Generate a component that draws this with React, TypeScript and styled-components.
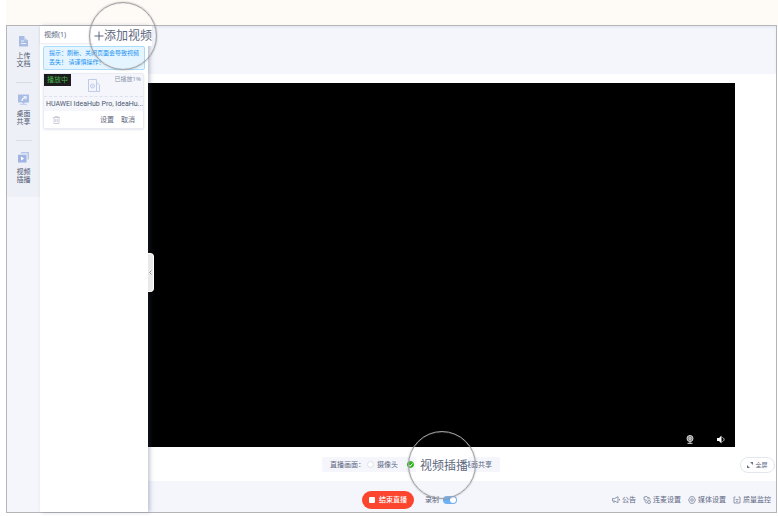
import React from "react";
import styled, { createGlobalStyle } from "styled-components";

const GlobalStyle = createGlobalStyle`
  * { box-sizing: border-box; }
  body {
    margin: 0;
    background: #fff;
    color: #5d6780;
    font: 7px/10px "Noto Sans", "Noto Sans CJK SC", sans-serif;
  }
  button {
    margin: 0;
    padding: 0;
    border: 0;
    background: none;
    color: inherit;
    font: inherit;
    white-space: nowrap;
    cursor: pointer;
  }
  svg { display: block; flex: none; }
`;

const Page = styled.div`
  display: flex;
  flex-direction: column;
  min-height: 100vh;
  padding: 0 1px 3px 6px;
`;

const Banner = styled.div`
  height: 25px;
  margin-right: -1px;
  background: #fefaf6;
`;

const Frame = styled.div`
  display: flex;
  flex: 1;
  border: 1px solid #b5b5b8;
`;

const Sidebar = styled.nav`
  width: 33px;
  background: #f4f6fc;
`;

const ToolList = styled.div`
  display: flex;
  flex-direction: column;
  gap: 1px;
  background: #eef0f7;
`;

const Tool = styled.button`
  display: flex;
  flex-direction: column;
  align-items: center;
  gap: 5px;
  height: 57px;
  padding-top: 10px;
  line-height: 8px;
  color: #4f5973;
  & + &::before {
    content: "";
    width: 16px;
    height: 1px;
    margin: -12px 0 6px;
    background: #dadde6;
  }
  &:last-child { height: 55px; }
`;

const ToolLabel = styled.span`
  width: 14px;
  white-space: normal;
`;

const Panel = styled.aside`
  position: relative;
  z-index: 1;
  width: 108px;
  background: #fff;
  box-shadow: 2px 0 4px rgba(60, 70, 110, 0.3);
`;

const PanelHeader = styled.header`
  position: relative;
  display: flex;
  align-items: center;
  height: 17px;
  padding-left: 4px;
  box-shadow: 0 1px 2px rgba(90, 100, 140, 0.15);
`;

const Title = styled.h1`
  margin: 0;
  font-size: 7px;
  font-weight: 400;
`;

const Notice = styled.p`
  margin: 3px 3px 0;
  padding: 2px 5px;
  border: 1px solid #a9dcfb;
  border-radius: 2px;
  background: #e4f5ff;
  color: #1d92f2;
  font-size: 6px;
  line-height: 9px;
  white-space: nowrap;
`;

const Card = styled.article`
  margin: 3px 4px 0 3px;
  border: 1px solid #eaecf4;
  border-radius: 2px;
  box-shadow: 0 1px 2px rgba(90, 100, 140, 0.15);
`;

const Thumb = styled.div`
  display: grid;
  grid-template-columns: 1fr auto 1fr;
  height: 23px;
  border-bottom: 1px dashed #dfe2ec;
  background: #f4f6fc;
  & > svg { margin-top: 5px; }
`;

const PlayTag = styled.span`
  justify-self: start;
  width: 27px;
  height: 12px;
  background: #1c1c1c;
  color: #45b34a;
  line-height: 12px;
  text-align: center;
`;

const Progress = styled.span`
  justify-self: end;
  padding-right: 2px;
  color: #8b93aa;
  font-size: 6px;
  white-space: nowrap;
`;

const CardTitle = styled.h2`
  margin: 0;
  padding: 0 2px;
  background: #f4f6fc;
  color: #4c566f;
  font-family: Roboto, "Noto Sans CJK SC", sans-serif;
  font-size: 7px;
  font-weight: 400;
  line-height: 14px;
  white-space: nowrap;
`;

const CardActions = styled.div`
  display: flex;
  align-items: center;
  gap: 7px;
  height: 17px;
  padding: 0 8px 0 9px;
  & > :first-child { margin-right: auto; }
`;

const Collapse = styled.button`
  position: absolute;
  top: 227px;
  left: 100%;
  display: grid;
  place-items: center;
  width: 6px;
  height: 39px;
  border: solid #fff;
  border-width: 1px 1px 1px 0;
  border-radius: 0 4px 4px 0;
  background: #e9e9ea;
`;

const Lens = styled.div<{ $wide?: boolean }>`
  position: absolute;
  z-index: 3;
  top: ${(p) => (p.$wide ? "-26px" : "-24px")};
  left: ${(p) => (p.$wide ? "86px" : "49px")};
  display: grid;
  place-items: center;
  width: 68px;
  height: 68px;
  border: 1px solid #a2a2a5;
  border-radius: 50%;
  box-shadow: 0 0 2px rgba(0, 0, 0, 0.3), inset 0 0 1px #a2a2a5;
`;

const LensButton = styled.button`
  display: flex;
  align-items: center;
  height: 20px;
  background: #fff;
  font-size: 12px;
`;

const LensLabel = styled.label`
  padding: 0 0 0 4px;
  background: #fff;
  font-size: 12px;
  line-height: 17px;
  white-space: nowrap;
`;

const Main = styled.main`
  display: flex;
  flex: 1;
  flex-direction: column;
  min-width: 0;
`;

const TopBar = styled.div`
  height: 48px;
  background: #f4f6fc;
  box-shadow: inset 0 2px 2px rgba(90, 100, 140, 0.08);
`;

const Stage = styled.section`
  display: flex;
  flex: 1;
  align-items: flex-end;
  justify-content: flex-end;
  gap: 23px;
  margin: 9px 41px 0 0;
  padding: 0 10px 3px;
  background: #000;
`;

const SourceBar = styled.div`
  display: flex;
  align-items: center;
  justify-content: space-between;
  height: 34px;
  padding: 1px 1px 0 174px;
`;

const Sources = styled.fieldset`
  position: relative;
  display: flex;
  align-items: center;
  width: 178px;
  height: 15px;
  margin: 0;
  padding: 0 8px;
  border: 0;
  border-radius: 2px;
  background: #f4f6fc;
  white-space: nowrap;
`;

const Option = styled.label`
  display: flex;
  align-items: center;
  gap: 3px;
  margin-left: 2px;
`;

const SharedOption = styled(Option)`
  margin-left: auto;
`;

const Radio = styled.input`
  appearance: none;
  width: 7px;
  height: 7px;
  margin: 0;
  border: 1px solid #dde0e9;
  border-radius: 50%;
  background: #fff;
  &:checked {
    border-color: #2eb51a;
    background: #2eb51a;
  }
`;

const CheckedRadio = styled.span`
  display: grid;
  place-items: center;
  margin-left: 9px;
  & > * { grid-area: 1 / 1; }
  svg { z-index: 1; pointer-events: none; }
`;

const FullScreen = styled.button`
  display: flex;
  align-items: center;
  justify-content: center;
  gap: 2px;
  width: 35px;
  height: 16px;
  border: 1px solid #e3e6ef;
  border-radius: 8px;
  background: #fff;
  font-size: 6px;
`;

const Footer = styled.footer`
  display: flex;
  align-items: center;
  height: 31px;
  padding: 7px 5px 0 214px;
  background: #f4f6fc;
`;

const EndButton = styled.button`
  display: flex;
  align-items: center;
  justify-content: center;
  gap: 4px;
  width: 52px;
  height: 18px;
  border-radius: 9px;
  background: #fc452f;
  color: #fff;
  font-weight: 500;
`;

const Record = styled.label`
  display: flex;
  align-items: center;
  gap: 4px;
  margin-left: 11px;
`;

const Switch = styled.input`
  appearance: none;
  display: flex;
  justify-content: flex-end;
  width: 14px;
  height: 8px;
  margin: 0;
  padding: 1px;
  border-radius: 4px;
  background: #6fb0f3;
  &::before {
    content: "";
    width: 6px;
    height: 6px;
    border-radius: 50%;
    background: #fff;
  }
`;

const FooterTools = styled.div`
  display: flex;
  gap: 7px;
  margin-left: auto;
`;

const FooterTool = styled.button`
  display: flex;
  align-items: center;
  gap: 2px;
`;

const DocIcon = () => (
  <svg width="11" height="11" viewBox="0 0 11 11">
    <path d="M1 0h5.5v4H10v6.5H1z" fill="#a9bce6" />
    <path d="M6.500 1.500 10 4.500H6.500z" fill="#bccbed" />
    <path d="M3 5h3M3 7.500h5" stroke="#edf1fb" />
  </svg>
);

const ShareIcon = () => (
  <svg width="11" height="11" viewBox="0 0 11 11">
    <path d="M0 .5h11v8H7L5.500 10 4 8.500H0z" fill="#a9bce6" />
    <path d="M2 10.300h7" stroke="#bccbed" />
    <path d="M4 7c0-2 1-3 3-3M5.500 2.700H8v2.500" fill="none" stroke="#fff" strokeWidth="1.100" />
  </svg>
);

const ClipIcon = () => (
  <svg width="11" height="11" viewBox="0 0 11 11">
    <path d="M3 0h8v7.500H9.500v-6H3z" fill="#b7c7ec" />
    <path d="M0 2.700h8.500v7.800H0z" fill="#9fb4e2" />
    <path d="m3 4.500 3.200 2L3 8.500z" fill="#fff" />
  </svg>
);

const VideoFileIcon = () => (
  <svg width="12" height="13" viewBox="0 0 12 13" fill="none" stroke="#bfcbe9">
    <path d="M.5.5h8v12h-8zM8.500 4h1l2 2v6.500h-3" />
    <circle cx="4.500" cy="7" r="2" />
    <path d="m4 6 1.500 1L4 8z" fill="#bfcbe9" stroke="none" />
  </svg>
);

const TrashIcon = () => (
  <svg width="7" height="8" viewBox="0 0 7 8" fill="none" stroke="#bfc3ce" strokeWidth=".8">
    <path d="M0 1.500h7M2.200 1.300V.4h2.600v.9M1 1.500v6h5v-6M2.700 3v3M4.300 3v3" />
  </svg>
);

const CameraIcon = () => (
  <svg width="8" height="9" viewBox="0 0 8 9" fill="none" stroke="#ddd">
    <circle cx="4" cy="3.500" r="3" fill="#777" />
    <circle cx="4" cy="3.500" r="1" />
    <path d="M4 6.500v1.500M1.500 8.300h5" />
  </svg>
);

const SpeakerIcon = () => (
  <svg width="8" height="9" viewBox="0 0 8 9">
    <path d="M0 3h2l2.500-2.500v8L2 6H0z" fill="#fff" />
    <path d="M5.500 2.500c2 .5 2 3.500 0 4" fill="none" stroke="#ccc" />
  </svg>
);

const LineIcon = ({ d, children }: { d: string; children?: React.ReactNode }) => (
  <svg width="8" height="8" viewBox="0 0 8 8" fill="none" stroke="#7b849b" strokeWidth=".8">
    <path d={d} />
    {children}
  </svg>
);

const tools = [
  { label: "上传文档", icon: <DocIcon /> },
  { label: "桌面共享", icon: <ShareIcon /> },
  { label: "视频插播", icon: <ClipIcon /> },
];

const footerTools = [
  { label: "公告", icon: <LineIcon d="M.5 2.500h2L6 .7v6L2.500 5h-2zM2 5v2M7.500 3v1.500" /> },
  {
    label: "连麦设置",
    icon: (
      <LineIcon d="M4 4.500 1 3.500V1l3-.5 1 1.500v1.500M2 4.500c0 2 1 2.500 2 2.500M5 1.500c1.500 0 2 .5 2 2">
        <circle cx="6" cy="6" r="1.500" />
      </LineIcon>
    ),
  },
  {
    label: "媒体设置",
    icon: (
      <LineIcon d="m2.500.7-2 3.300 2 3.300h3l2-3.300-2-3.300z">
        <circle cx="4" cy="4" r="1.300" />
      </LineIcon>
    ),
  },
  { label: "质量监控", icon: <LineIcon d="M2.500 1H1v6h6V1H5.500M2.500 3.500h3M3 5.300h2" /> },
];

export default function App() {
  return (
    <>
      <GlobalStyle />
      <Page>
        <Banner />
        <Frame>
          <Sidebar>
            <ToolList>
              {tools.map((tool) => (
                <Tool key={tool.label}>
                  {tool.icon}
                  <ToolLabel>{tool.label}</ToolLabel>
                </Tool>
              ))}
            </ToolList>
          </Sidebar>
          <Panel>
            <PanelHeader>
              <Title>视频(1)</Title>
              <Lens>
                <LensButton>
                  <svg width="10" height="10" viewBox="0 0 10 10" stroke="#5d6780">
                    <path d="M.5 5h9M5 .5v9" />
                  </svg>
                  添加视频
                </LensButton>
              </Lens>
            </PanelHeader>
            <Notice>
              提示：刷新、关闭页面会导致视频
              <br />
              丢失！ 请谨慎操作！
            </Notice>
            <Card>
              <Thumb>
                <PlayTag>播放中</PlayTag>
                <VideoFileIcon />
                <Progress>已播放1%</Progress>
              </Thumb>
              <CardTitle>HUAWEI IdeaHub Pro, IdeaHu...</CardTitle>
              <CardActions>
                <button aria-label="删除">
                  <TrashIcon />
                </button>
                <button>设置</button>
                <button>取消</button>
              </CardActions>
            </Card>
            <Collapse aria-label="收起">
              <svg width="3" height="5" viewBox="0 0 3 5" fill="none" stroke="#9299ad">
                <path d="M2.500.5.500 2.500l2 2" />
              </svg>
            </Collapse>
          </Panel>
          <Main>
            <TopBar />
            <Stage>
              <button aria-label="摄像头">
                <CameraIcon />
              </button>
              <button aria-label="音量">
                <SpeakerIcon />
              </button>
            </Stage>
            <SourceBar>
              <Sources>
                <span>直播画面：</span>
                <Option>
                  <Radio type="radio" name="source" />
                  摄像头
                </Option>
                <CheckedRadio>
                  <Radio type="radio" name="source" id="clip" defaultChecked />
                  <svg width="5" height="4" viewBox="0 0 5 4" fill="none" stroke="#fff">
                    <path d="m.5 1.800 1.500 1.500L4.500.5" />
                  </svg>
                </CheckedRadio>
                <Lens $wide>
                  <LensLabel htmlFor="clip">视频插播</LensLabel>
                </Lens>
                <SharedOption>
                  <Radio type="radio" name="source" />
                  桌面共享
                </SharedOption>
              </Sources>
              <FullScreen>
                <svg width="6" height="6" viewBox="0 0 6 6" fill="#68728b">
                  <path d="M3 0h3v3zM0 3l3 3H0z" />
                </svg>
                全屏
              </FullScreen>
            </SourceBar>
            <Footer>
              <EndButton>
                <svg width="6" height="6" viewBox="0 0 6 6">
                  <rect width="6" height="6" rx="1" fill="#fff" />
                </svg>
                结束直播
              </EndButton>
              <Record>
                录制
                <Switch type="checkbox" role="switch" defaultChecked />
              </Record>
              <FooterTools>
                {footerTools.map((tool) => (
                  <FooterTool key={tool.label}>
                    {tool.icon}
                    {tool.label}
                  </FooterTool>
                ))}
              </FooterTools>
            </Footer>
          </Main>
        </Frame>
      </Page>
    </>
  );
}
